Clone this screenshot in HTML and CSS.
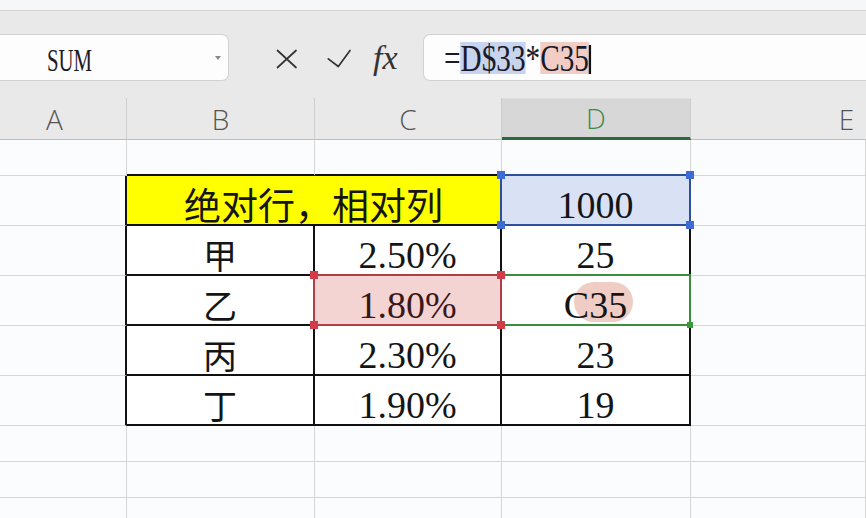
FILE: index.html
```html
<!DOCTYPE html>
<html lang="zh-CN">
<head>
    <meta charset="UTF-8">
    <title>绝对行，相对列</title>
    <link rel="stylesheet" href="styles.css">
</head>
<body>
    <div class="titlebar"></div>

    <div class="formula-bar">
        <div class="name-box">
            <span class="name">SUM</span>
            <span class="caret"></span>
        </div>
        <div class="tools">
            <svg class="icon-x" viewBox="0 0 22 22">
                <path d="M1.5 3.5 L20 20.5 M20 3.5 L1.5 20.5" />
            </svg>
            <svg class="icon-ok" viewBox="0 0 26 22">
                <polyline points="2.3,11.8 12.3,19.5 24,3.5" />
            </svg>
            <span class="fx">fx</span>
        </div>
        <div class="formula-box">
            <span class="formula">=<span class="ref ref-d">D$33</span>*<span class="ref ref-c">C35</span><span class="cursor"></span></span>
        </div>
    </div>

    <div class="sheet">
        <!-- column headers -->
        <div class="hd hd-a">A</div>
        <div class="hd">B</div>
        <div class="hd">C</div>
        <div class="hd active">D</div>
        <div class="hd hd-e">E</div>

        <!-- row 32 -->
        <div class="c"></div>
        <div class="c tb"></div>
        <div class="c tb"></div>
        <div class="c tb"></div>
        <div class="c"></div>

        <!-- row 33 -->
        <div class="c tl"></div>
        <div class="c t cjk title-cell">绝对行，相对列</div>
        <div class="c t num blue-cell">1000
            <span class="sel sel-blue"><span class="h tl-h"></span><span class="h tr-h"></span><span class="h bl-h"></span><span class="h br-h"></span></span>
        </div>
        <div class="c"></div>

        <!-- row 34 -->
        <div class="c tl"></div>
        <div class="c t cjk">甲</div>
        <div class="c t num">2.50%</div>
        <div class="c t num">25</div>
        <div class="c"></div>

        <!-- row 35 -->
        <div class="c tl"></div>
        <div class="c t cjk">乙</div>
        <div class="c t num red-cell">1.80%
            <span class="sel sel-red"><span class="h tl-h"></span><span class="h tr-h"></span><span class="h bl-h"></span><span class="h br-h"></span></span>
        </div>
        <div class="c t num green-cell"><span class="pill">C35</span>
            <span class="sel sel-green"><span class="fill-h"></span></span>
        </div>
        <div class="c"></div>

        <!-- row 36 -->
        <div class="c tl"></div>
        <div class="c t cjk">丙</div>
        <div class="c t num">2.30%</div>
        <div class="c t num">23</div>
        <div class="c"></div>

        <!-- row 37 -->
        <div class="c tl"></div>
        <div class="c t cjk">丁</div>
        <div class="c t num">1.90%</div>
        <div class="c t num">19</div>
        <div class="c"></div>

        <!-- empty rows -->
        <div class="c"></div><div class="c"></div><div class="c"></div><div class="c"></div><div class="c"></div>
        <div class="c"></div><div class="c"></div><div class="c"></div><div class="c"></div><div class="c"></div>
        <div class="c"></div><div class="c"></div><div class="c"></div><div class="c"></div><div class="c"></div>
    </div>
</body>
</html>
```

FILE: styles.css
```css
* {
    box-sizing: border-box;
}
body {
    margin: 0;
    width: 866px;
    height: 518px;
    overflow: hidden;
    background: #fbfcfe;
    font-family: "Liberation Serif", serif;
    color: #151515;
}

/* top strip + formula bar */
.titlebar {
    height: 11px;
    background: #f6f7f8;
    border-bottom: 1px solid #d3d4d6;
}
.formula-bar {
    height: 87px;
    background: #e9e9e9;
    display: flex;
    align-items: flex-start;
    padding-top: 23px;
}
.name-box {
    flex: 0 0 229px;
    height: 47px;
    background: #fdfdfd;
    border: 1px solid #d2d2d2;
    border-left: none;
    border-radius: 0 7px 7px 0;
    display: flex;
    align-items: center;
    padding: 0 7px 0 47px;
}
.name {
    display: inline-block;
    font-size: 32px;
    line-height: 1;
    padding-top: 4px;
    color: #1e1a24;
    transform: scaleX(0.65);
    transform-origin: left center;
}
.caret {
    margin-left: auto;
    width: 0;
    height: 0;
    border-left: 3.5px solid transparent;
    border-right: 3.5px solid transparent;
    border-top: 4px solid #8a8a8a;
}
.tools {
    display: flex;
    align-items: center;
    height: 47px;
    margin-left: 47px;
}
.tools svg {
    fill: none;
    stroke: #333;
    stroke-width: 1.7;
    stroke-linecap: round;
    stroke-linejoin: round;
}
.icon-x {
    width: 22px;
    height: 22px;
}
.icon-ok {
    width: 26px;
    height: 22px;
    margin-left: 28px;
}
.fx {
    width: 30px;
    margin-left: 21px;
    font-style: italic;
    font-size: 34px;
    line-height: 1;
    color: #333;
}
.formula-box {
    flex: 1 1 auto;
    height: 47px;
    margin-left: 20px;
    background: #fdfdfd;
    border: 1px solid #d2d2d2;
    border-right: none;
    border-radius: 7px 0 0 7px;
    display: flex;
    align-items: center;
    padding-left: 20px;
    overflow: hidden;
}
.formula {
    display: inline-block;
    font-size: 38px;
    line-height: 1;
    white-space: nowrap;
    color: #1a1a2a;
    transform: scaleX(0.77);
    transform-origin: left center;
}
.ref {
    display: inline-block;
    height: 32px;
    line-height: 32px;
}
.ref-d {
    background: #c8d4ee;
}
.ref-c {
    background: #f1cdc6;
}
.cursor {
    display: inline-block;
    width: 2.5px;
    height: 29px;
    background: #111;
    vertical-align: -3px;
}

/* sheet grid */
.sheet {
    display: grid;
    grid-template-columns: 127px 188px 187px 189px 175px;
    grid-template-rows: 42px 36px 50px 50px 50px 50px 50px 36px 36px 36px;
    width: 866px;
}
.hd {
    display: flex;
    align-items: center;
    justify-content: center;
    background: #e9e9e9;
    border-right: 1px solid #cdcdcd;
    border-bottom: 1px solid #bdbdbd;
    font-family: "Open Sans", "Noto Sans", sans-serif;
    font-weight: 300;
    font-size: 28px;
    color: #555;
}
.hd-a {
    padding-right: 17px;
}
.hd-e {
    padding-left: 136px;
    border-right: none;
}
.hd.active {
    background: #d7d7d7;
    color: #3c8a4c;
    border-top: 1px solid #e1e1e1;
    border-bottom: 3px solid #2b6b3b;
}
.c {
    border-right: 1px solid #d6d6d6;
    border-bottom: 1px solid #d6d6d6;
}
.c.tb {
    border-bottom: 2px solid #111;
}
.c.tl {
    border-right: 2px solid #111;
}
.c.t {
    display: flex;
    align-items: center;
    justify-content: center;
    padding-top: 9px;
    line-height: 1;
    border-right: 2px solid #111;
    border-bottom: 2px solid #111;
    background: #fff;
}
.num {
    font-size: 38px;
}
.cjk {
    font-family: "Noto Sans CJK SC", sans-serif;
    font-size: 34px;
}
.title-cell {
    grid-column: span 2;
    background: #ffff00 !important;
    font-size: 37px;
}

/* selections */
.blue-cell,
.red-cell,
.green-cell {
    position: relative;
}
.blue-cell {
    background: #d9e2f4 !important;
}
.red-cell {
    background: #f4d3d3 !important;
    color: #3a1818;
}
.sel {
    position: absolute;
    top: -2px;
    left: -2px;
    right: -2px;
    bottom: -2px;
    border: 2px solid;
}
.sel-blue {
    border-color: #2d4f9e;
    z-index: 2;
}
.sel-red {
    border-color: #b33c46;
    z-index: 2;
}
.sel-green {
    border-color: #3b8e3b;
    z-index: 1;
}
.h {
    position: absolute;
    width: 8px;
    height: 8px;
}
.sel-blue .h {
    background: #3e6cd6;
}
.sel-red .h {
    background: #d13c47;
}
.tl-h {
    left: -5px;
    top: -5px;
}
.tr-h {
    right: -5px;
    top: -5px;
}
.bl-h {
    left: -5px;
    bottom: -5px;
}
.br-h {
    right: -5px;
    bottom: -5px;
}
.fill-h {
    position: absolute;
    right: -4px;
    bottom: -4px;
    width: 6px;
    height: 6px;
    background: #3a9a3a;
}
.pill {
    position: relative;
    z-index: 0;
}
.pill::before {
    content: "";
    position: absolute;
    top: -4px;
    bottom: 2px;
    left: 10px;
    right: -6px;
    border-radius: 20px;
    background: #efcdc4;
    z-index: -1;
}
```
